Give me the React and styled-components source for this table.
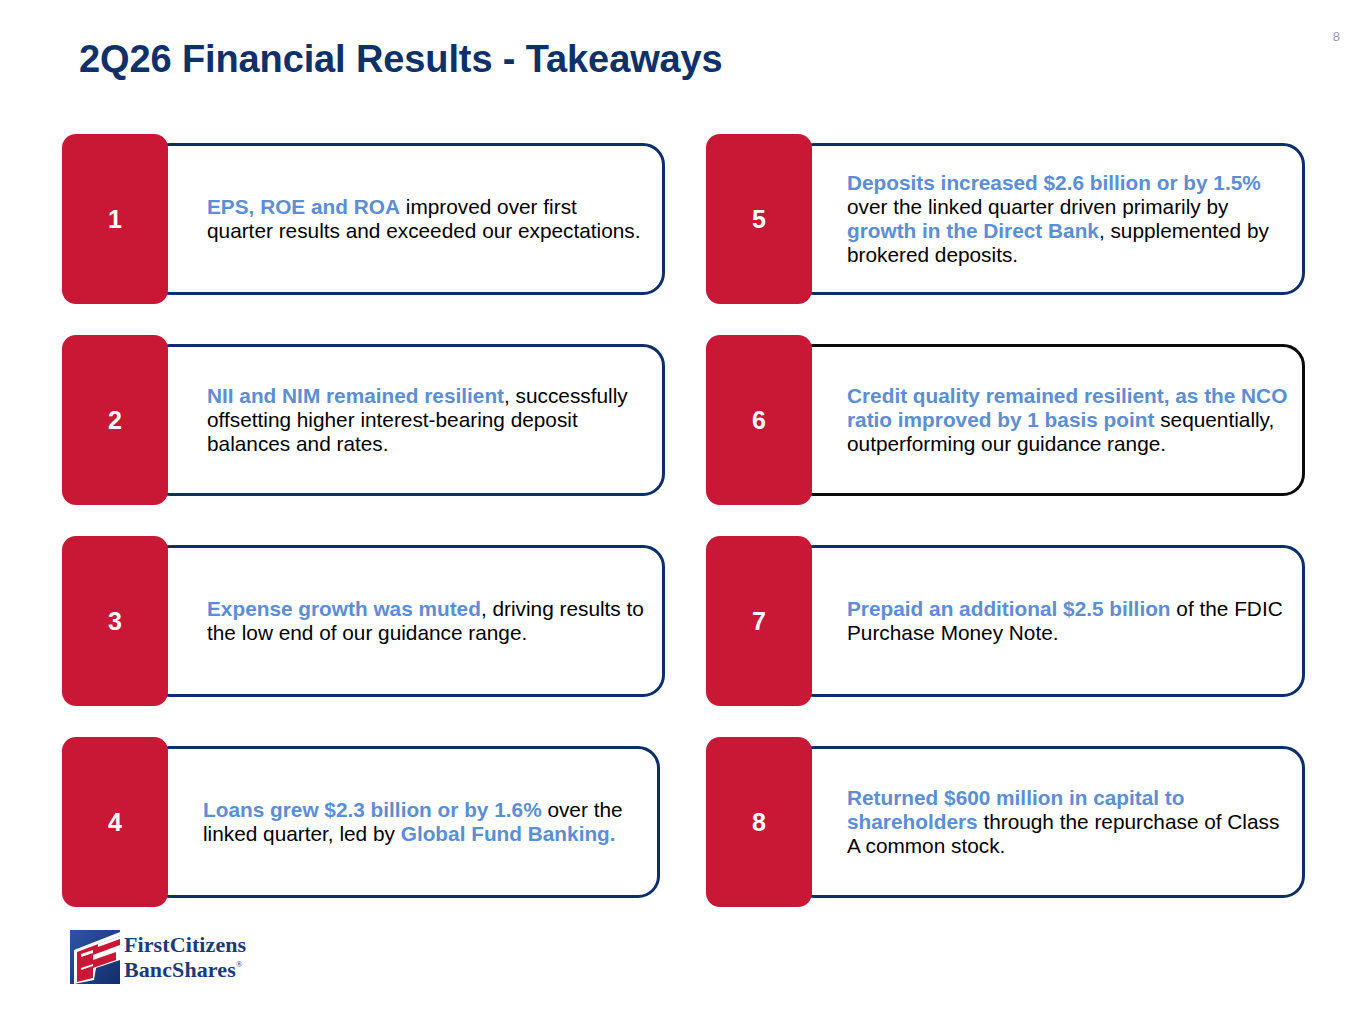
import React from "react";
import styled, { createGlobalStyle } from "styled-components";

const GlobalStyle = createGlobalStyle`
  html, body {
    margin: 0;
    padding: 0;
    background: #ffffff;
  }
  body {
    font-family: "Liberation Sans", Arial, sans-serif;
  }
`;

const NAVY = "#0b2f66";
const RED = "#c91835";
const BLUE = "#5b8ed4";

const takeaways = [
  {
    n: 1,
    inset: 39,
    text: "**EPS, ROE and ROA** improved over first\nquarter results and exceeded our expectations.",
  },
  {
    n: 5,
    inset: 35,
    text: "**Deposits increased $2.6 billion or by 1.5%**\nover the linked quarter driven primarily by\n**growth in the Direct Bank**, supplemented by\nbrokered deposits.",
  },
  {
    n: 2,
    inset: 39,
    text: "**NII and NIM remained resilient**, successfully\noffsetting higher interest-bearing deposit\nbalances and rates.",
  },
  {
    n: 6,
    inset: 35,
    dark: true,
    text: "**Credit quality remained resilient, as the NCO**\n**ratio improved by 1 basis point** sequentially,\noutperforming our guidance range.",
  },
  {
    n: 3,
    inset: 39,
    text: "**Expense growth was muted**, driving results to\nthe low end of our guidance range.",
  },
  {
    n: 7,
    inset: 35,
    text: "**Prepaid an additional $2.5 billion** of the FDIC\nPurchase Money Note.",
  },
  {
    n: 4,
    inset: 35,
    trim: 5,
    text: "**Loans grew $2.3 billion or by 1.6%** over the\nlinked quarter, led by **Global Fund Banking.**",
  },
  {
    n: 8,
    inset: 35,
    text: "**Returned $600 million in capital to**\n**shareholders** through the repurchase of Class\nA common stock.",
  },
];

const Page = styled.div`
  position: relative;
  width: 1365px;
  height: 1024px;
  box-sizing: border-box;
  padding: 40px 0 0 62px;
  overflow: hidden;
`;

const PageNumber = styled.div`
  position: absolute;
  top: 29px;
  right: 25px;
  font-size: 13px;
  color: #9a9a9a;
`;

const Title = styled.h1`
  margin: 0 0 56px 17px;
  font-size: 38px;
  line-height: 38px;
  font-weight: 700;
  letter-spacing: -0.12px;
  color: #0f3169;
`;

const Grid = styled.div`
  display: grid;
  grid-template-columns: 603px 599px;
  grid-auto-rows: 170px;
  column-gap: 41px;
  row-gap: 31px;
`;

const Card = styled.div`
  display: flex;
  align-items: flex-start;
`;

const Badge = styled.div`
  position: relative;
  z-index: 1;
  flex: 0 0 106px;
  height: 170px;
  border-radius: 14px;
  background: ${RED};
  color: #ffffff;
  display: flex;
  align-items: center;
  justify-content: center;
  font-size: 25px;
  font-weight: 700;
`;

const Box = styled.div`
  flex: 1;
  height: 152px;
  box-sizing: border-box;
  margin: 9px ${(p) => p.$trim || 0}px 0 -20px;
  border: 3px solid ${(p) => (p.$dark ? "#0a0a0a" : NAVY)};
  border-radius: 22px;
  padding-left: ${(p) => p.$inset + 17}px;
  display: flex;
  align-items: center;
`;

const Text = styled.p`
  margin: 0;
  font-size: 20.8px;
  line-height: 24px;
  color: #000000;
  white-space: nowrap;
`;

const Hl = styled.span`
  color: ${BLUE};
  font-weight: 700;
`;

const Logo = styled.div`
  display: flex;
  align-items: center;
  gap: 4px;
  margin: 23px 0 0 8px;
`;

const Wordmark = styled.div`
  display: flex;
  flex-direction: column;
`;

const WordLine = styled.div`
  font-family: "Liberation Serif", "Times New Roman", serif;
  font-weight: 700;
  font-size: 22px;
  line-height: 25px;
  white-space: nowrap;
  letter-spacing: 0.1px;
  color: #1b3a78;
`;

const Reg = styled.span`
  font-size: 9px;
  font-weight: 400;
  vertical-align: top;
  line-height: 14px;
`;

const renderLines = (text) =>
  text.split("\n").map((line, i, all) => (
    <React.Fragment key={i}>
      {line.split("**").map((part, j) =>
        j % 2 ? <Hl key={j}>{part}</Hl> : <span key={j}>{part}</span>
      )}
      {i < all.length - 1 && <br />}
    </React.Fragment>
  ));

const Mark = () => (
  <svg width="50" height="54" viewBox="0 0 50 54">
    <defs>
      <linearGradient id="fcb" x1="0" y1="0" x2="1" y2="1">
        <stop offset="0" stopColor="#2d55a6" />
        <stop offset="1" stopColor="#122d6b" />
      </linearGradient>
    </defs>
    <rect x="0" y="0" width="50" height="54" fill="url(#fcb)" />
    <polygon points="4,20 50,2 50,30 26,38 24,50 4,54" fill="#ffffff" />
    <polygon points="7,22 23,16 23,48 7,52" fill={RED} />
    <polygon points="23,16 50,6 50,15 23,25" fill={RED} />
    <polygon points="23,30 46,22 46,30 23,38" fill={RED} />
    <polygon points="28,14 50,6 50,9 28,17" fill="#ffffff" />
    <polygon points="11,24 23,20 23,23 11,27" fill="#ffffff" />
    <polygon points="11,38 23,34 23,36 11,40" fill="#ffffff" />
  </svg>
);

const App = () => (
  <>
    <GlobalStyle />
    <Page>
      <PageNumber>8</PageNumber>
      <Title>2Q26 Financial Results - Takeaways</Title>
      <Grid>
        {takeaways.map((t) => (
          <Card key={t.n}>
            <Badge>{t.n}</Badge>
            <Box $inset={t.inset} $trim={t.trim} $dark={t.dark}>
              <Text>{renderLines(t.text)}</Text>
            </Box>
          </Card>
        ))}
      </Grid>
      <Logo>
        <Mark />
        <Wordmark>
          <WordLine>FirstCitizens</WordLine>
          <WordLine>
            BancShares<Reg>®</Reg>
          </WordLine>
        </Wordmark>
      </Logo>
    </Page>
  </>
);

export default App;
